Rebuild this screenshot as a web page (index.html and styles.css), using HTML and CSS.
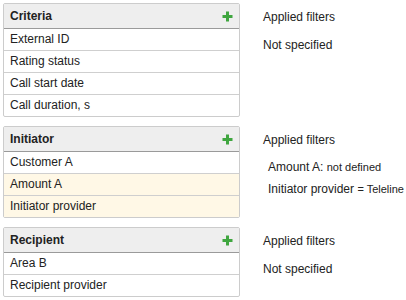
FILE: index.html
```html
<!DOCTYPE html>
<html>
<head>
<meta charset="utf-8">
<link rel="stylesheet" href="styles.css">
</head>
<body>
<div class="page">
  <section class="section">
    <div class="box">
      <div class="box-head"><span>Criteria</span><svg class="plus" width="11" height="11" viewBox="0 0 11 11"><path d="M5.5 0.5V10.5M0.5 5.5H10.5"/></svg></div>
      <div class="row">External ID</div>
      <div class="row">Rating status</div>
      <div class="row">Call start date</div>
      <div class="row">Call duration, s</div>
    </div>
    <div class="filters">
      <div class="filters-title">Applied filters</div>
      <div class="filters-empty">Not specified</div>
    </div>
  </section>
  <section class="section">
    <div class="box">
      <div class="box-head"><span>Initiator</span><svg class="plus" width="11" height="11" viewBox="0 0 11 11"><path d="M5.5 0.5V10.5M0.5 5.5H10.5"/></svg></div>
      <div class="row">Customer A</div>
      <div class="row active">Amount A</div>
      <div class="row active">Initiator provider</div>
    </div>
    <div class="filters">
      <div class="filters-title">Applied filters</div>
      <div class="filter-list">
        <div class="filter">Amount A: <span class="val">not defined</span></div>
        <div class="filter">Initiator provider <span class="val">= Teleline</span></div>
      </div>
    </div>
  </section>
  <section class="section">
    <div class="box">
      <div class="box-head"><span>Recipient</span><svg class="plus" width="11" height="11" viewBox="0 0 11 11"><path d="M5.5 0.5V10.5M0.5 5.5H10.5"/></svg></div>
      <div class="row">Area B</div>
      <div class="row">Recipient provider</div>
    </div>
    <div class="filters">
      <div class="filters-title">Applied filters</div>
      <div class="filters-empty">Not specified</div>
    </div>
  </section>
</div>
</body>
</html>
```

FILE: styles.css
```css
html, body {
  margin: 0;
  padding: 0;
  background: #ffffff;
}
body {
  font-family: "Liberation Sans", Arial, sans-serif;
  font-size: 12px;
  color: #222;
}
.page {
  padding: 3px 0 0 3px;
  display: flex;
  flex-direction: column;
  gap: 9px;
}
.section {
  display: flex;
  align-items: flex-start;
  gap: 23px;
}
.box {
  flex: none;
  width: 237px;
  box-sizing: border-box;
  border: 1px solid #cccccc;
  border-radius: 2px;
}
.box-head {
  height: 24px;
  display: flex;
  align-items: center;
  justify-content: space-between;
  padding: 0 6px 0 6px;
  background: #eeeeee;
  border-bottom: 1px solid #9a9a9a;
  font-weight: bold;
  color: #222;
}
.plus {
  display: block;
  fill: none;
  stroke: #3fa63f;
  stroke-width: 3;
  margin-right: 0;
}
.row {
  height: 21px;
  line-height: 21px;
  padding: 0 6px;
}
.row + .row {
  border-top: 1px solid #cfcfcf;
}
.row.active {
  background: #fff8e6;
}
.filters {
  flex: none;
  white-space: nowrap;
  padding-top: 6px;
}
.filters-title {
  line-height: 16px;
}
.filters-empty {
  margin-top: 12px;
  line-height: 16px;
}
.filter-list {
  margin-top: 11px;
  padding-left: 5px;
  display: flex;
  flex-direction: column;
  gap: 6px;
}
.filter {
  line-height: 16px;
}
.val {
  font-size: 11px;
}
```
